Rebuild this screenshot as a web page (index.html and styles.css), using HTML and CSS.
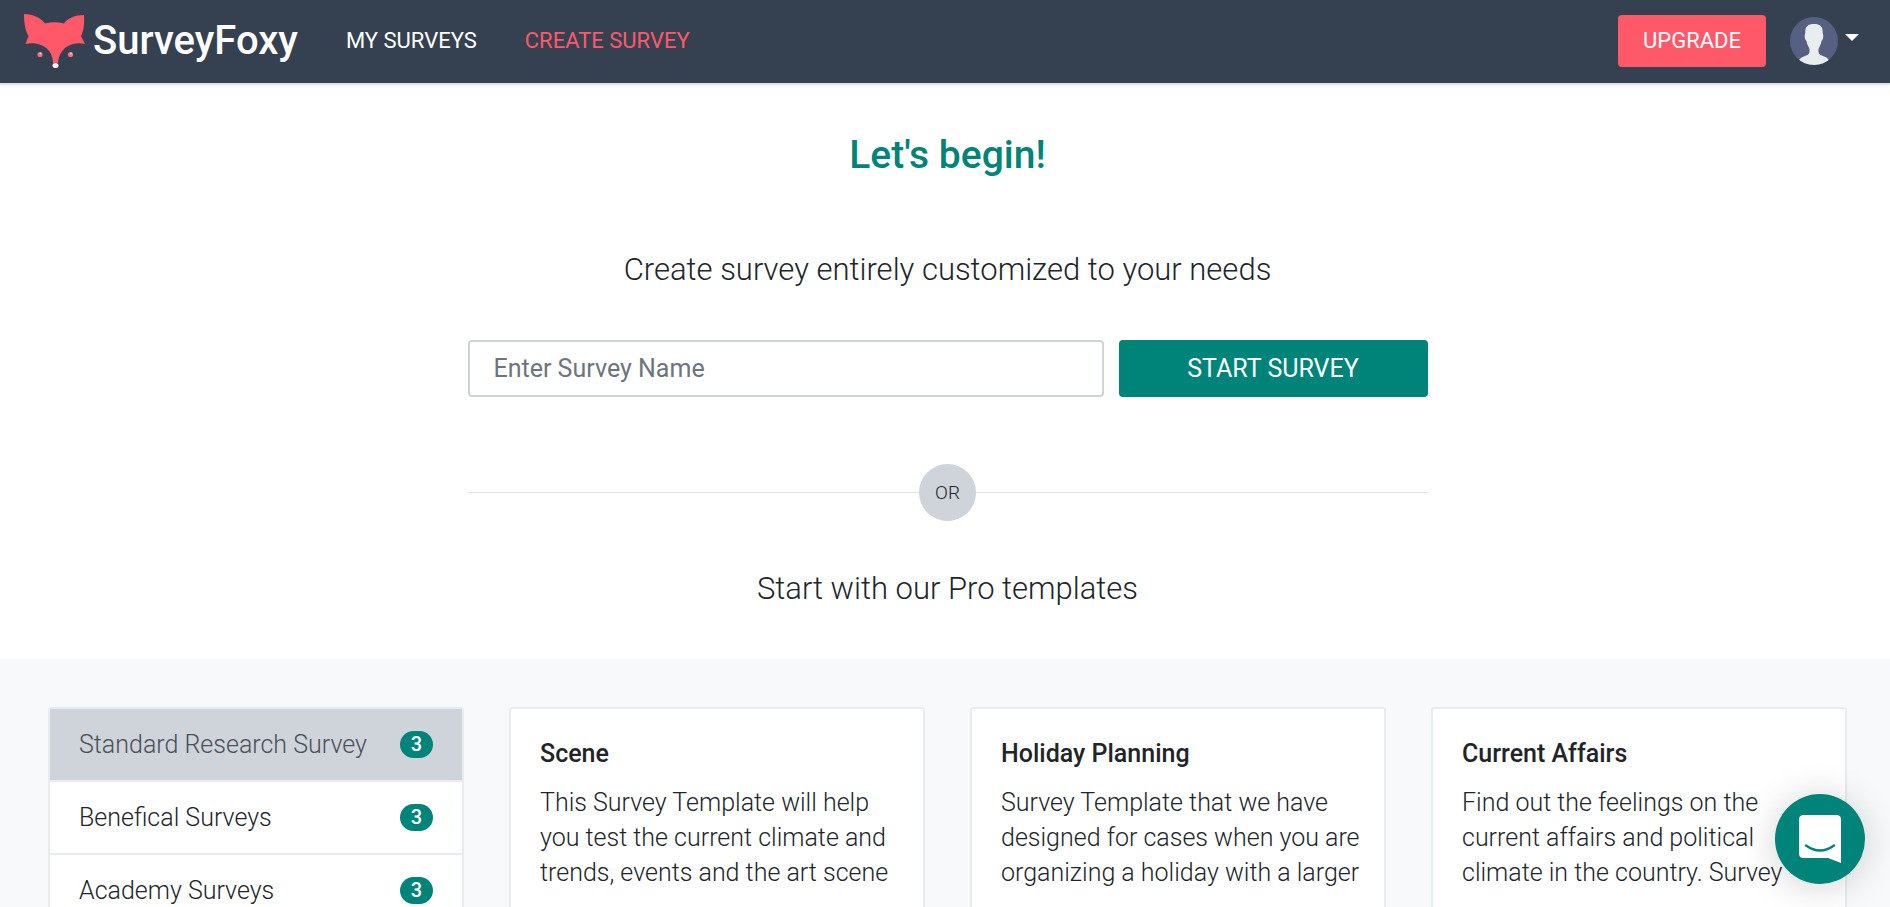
FILE: index.html
```html
<!DOCTYPE html>
<html lang="en">
<head>
<meta charset="utf-8">
<meta name="viewport" content="width=device-width, initial-scale=1">
<title>SurveyFoxy - Create Survey</title>
<link rel="stylesheet" href="styles.css">
</head>
<body>
<header class="navbar">
  <a class="brand" href="#">
    <svg class="brand-mark" viewBox="0 0 61 54" aria-hidden="true">
      <path fill="#ff5969" d="M0 0C9 0 17 4 21 9.500Q31 7 40 9.500C44 4 51 1 60 1C60.500 8 60 17 57 22L61 30C49 27 35 33 34 49H29C29 33 14 27 1.500 30L4.500 22C1 16 0 8 0 0Z"/>
      <circle cx="16" cy="40.500" r="2.600" fill="#ff6d7b"/><circle cx="16.500" cy="39.500" r="1" fill="#e4c9d0"/>
      <circle cx="46.500" cy="40.500" r="2.600" fill="#ff6d7b"/><circle cx="47" cy="39.500" r="1" fill="#e4c9d0"/>
      <ellipse cx="31.500" cy="51.500" rx="3" ry="2.500" fill="#fff"/>
    </svg>
    <span class="brand-name">SurveyFoxy</span>
  </a>
  <nav class="nav-links">
    <a class="nav-link" href="#">MY SURVEYS</a>
    <a class="nav-link nav-link-active" href="#">CREATE SURVEY</a>
  </nav>
  <div class="nav-actions">
    <button class="upgrade" type="button">UPGRADE</button>
    <button class="account" type="button" aria-label="Account menu">
      <svg class="avatar" viewBox="0 0 48 48" aria-hidden="true">
        <defs><clipPath id="disc"><circle cx="24" cy="24" r="24"/></clipPath></defs>
        <g clip-path="url(#disc)">
          <rect width="48" height="48" fill="#576080"/>
          <path fill="#e8eeee" d="M24 7C30 7 33 9 32.700 16C34 19 33 23 31.500 24C31 28 29 30 28.500 32C28 37 30 38 33 39Q37 40 39 43V48H9V43Q11 40 15 39C18 38 20 37 19.500 32C19 30 17 28 16.500 24C15 23 14 19 15.300 16C15 9 18 7 24 7Z"/>
        </g>
      </svg>
      <svg class="caret" viewBox="0 0 14 7" aria-hidden="true"><path fill="#fff" d="M0 0H14L7 7Z"/></svg>
    </button>
  </div>
</header>

<main>
  <section class="intro">
    <h1 class="title">Let's begin!</h1>
    <h2 class="subtitle">Create survey entirely customized to your needs</h2>
    <form class="start-form">
      <input class="survey-name" type="text" placeholder="Enter Survey Name" aria-label="Survey name">
      <button class="start-button" type="button">START SURVEY</button>
    </form>
    <div class="divider"><span class="divider-label">OR</span></div>
    <h2 class="subtitle">Start with our Pro templates</h2>
  </section>

  <section class="templates">
    <ul class="categories">
      <li><a class="category category-active" href="#">Standard Research Survey <span class="count">3</span></a></li>
      <li><a class="category" href="#">Benefical Surveys <span class="count">3</span></a></li>
      <li><a class="category" href="#">Academy Surveys <span class="count">3</span></a></li>
    </ul>
    <article class="card">
      <h3 class="card-title">Scene</h3>
      <p class="card-text">This Survey Template will help<br>you test the current climate and<br>trends, events and the art scene</p>
    </article>
    <article class="card">
      <h3 class="card-title">Holiday Planning</h3>
      <p class="card-text">Survey Template that we have<br>designed for cases when you are<br>organizing a holiday with a larger</p>
    </article>
    <article class="card">
      <h3 class="card-title">Current Affairs</h3>
      <p class="card-text">Find out the feelings on the<br>current affairs and political<br>climate in the country. Survey</p>
    </article>
  </section>
</main>

<button class="messenger" type="button" aria-label="Open chat">
  <svg class="messenger-icon" viewBox="0 0 42 48" aria-hidden="true">
    <path fill="#fff" d="M4.500 0H37.500Q42 0 42 4.500V48L29 43H4.500Q0 43 0 38.500V4.500Q0 0 4.500 0Z"/>
    <path d="M7 30.500Q21 40.500 35 30.500" fill="none" stroke="#008378" stroke-width="2.400" stroke-linecap="round"/>
  </svg>
</button>
</body>
</html>
```

FILE: styles.css
```css
* { box-sizing: border-box; }

body {
  margin: 0;
  background: #fff;
  color: #212529;
  font-family: Roboto, "Open Sans", sans-serif;
  font-size: 25px;
  font-weight: 300;
  line-height: 35px;
}

a { color: inherit; text-decoration: none; }
button, input { font: inherit; }
button { border: 0; padding: 0; cursor: pointer; }
svg { display: block; }
h1, h2, h3, p, ul { margin: 0; padding: 0; }

.navbar {
  display: flex;
  align-items: center;
  height: 85px;
  padding: 0 31px 2px 24px;
  background: #354050;
  border-bottom: 2px solid #dfe5ea;
  box-shadow: 0 2px 4px rgba(0, 0, 0, 0.04);
  color: #fff;
}
.brand { display: flex; align-items: center; gap: 8px; }
.brand-mark { width: 61px; height: 54px; }
.brand-name { font-size: 40px; font-weight: 500; }
.nav-links { display: flex; gap: 48px; margin-left: 48px; }
.nav-link { font-size: 22px; font-weight: 400; }
.nav-link-active { color: #ff5969; }
.nav-actions { display: flex; align-items: center; gap: 24px; margin-left: auto; }
.upgrade {
  width: 148px;
  height: 52px;
  border-radius: 4px;
  background: #ff5969;
  color: #fff;
  font-size: 22px;
  font-weight: 400;
}
.account { display: flex; gap: 7px; background: none; }
.avatar { width: 48px; height: 48px; }
.caret { width: 14px; height: 7px; margin-top: 17px; }

.intro {
  display: flex;
  flex-direction: column;
  align-items: center;
  padding: 48px 0 46px 5px;
}
.title {
  color: #008378;
  font-size: 39px;
  font-weight: 500;
  line-height: 44px;
}
.subtitle { font-size: 31px; font-weight: 300; line-height: 48px; }
.title + .subtitle { margin-top: 69px; }
.start-form {
  display: grid;
  grid-template-columns: 636fr 309fr;
  gap: 15px;
  width: 100%;
  max-width: 960px;
  margin-top: 46px;
}
.survey-name {
  min-width: 0;
  height: 57px;
  padding: 0 24px;
  border: 2px solid #ced4da;
  border-radius: 4px;
  background: #fff;
  color: #495057;
  font-weight: 400;
}
.survey-name::placeholder { color: #6c757d; opacity: 1; }
.start-button { border-radius: 4px; background: #008378; color: #fff; font-weight: 400; }
.divider {
  display: flex;
  align-items: center;
  width: 100%;
  max-width: 960px;
  margin: 67px 0 44px;
}
.divider::before, .divider::after { content: ""; flex: 1; border-top: 1px solid #dfe1e3; }
.divider-label {
  width: 57px;
  border-radius: 50%;
  background: #ced4da;
  font-size: 19px;
  line-height: 57px;
  text-align: center;
}

.templates {
  display: grid;
  grid-template-columns: repeat(4, minmax(0, 1fr));
  gap: 45px;
  padding: 48px 43px 48px 48px;
  background: #f8f9fb;
}
.categories, .card { border: 2px solid #e9ecef; border-radius: 3px; background: #fff; }
.categories { list-style: none; }
.category {
  display: flex;
  align-items: center;
  justify-content: space-between;
  height: 73px;
  padding: 0 29px;
  border-bottom: 2px solid #e9ecef;
}
.category-active { background: #ced4da; color: #495057; }
.count {
  width: 33px;
  border-radius: 14px;
  background: #008378;
  color: #fff;
  font-size: 20px;
  font-weight: 500;
  line-height: 27px;
  text-align: center;
}
.card { padding: 27px 29px 28px; }
.card-title { font-size: 25px; font-weight: 500; line-height: 35px; }
.card-text { margin-top: 14px; white-space: nowrap; }

.messenger {
  position: fixed;
  right: 25px;
  bottom: 23px;
  display: grid;
  place-items: center;
  width: 90px;
  height: 90px;
  border-radius: 50%;
  background: #008378;
  box-shadow: 0 3px 36px rgba(0, 0, 0, 0.18);
}
.messenger-icon { width: 42px; height: 48px; }
```
